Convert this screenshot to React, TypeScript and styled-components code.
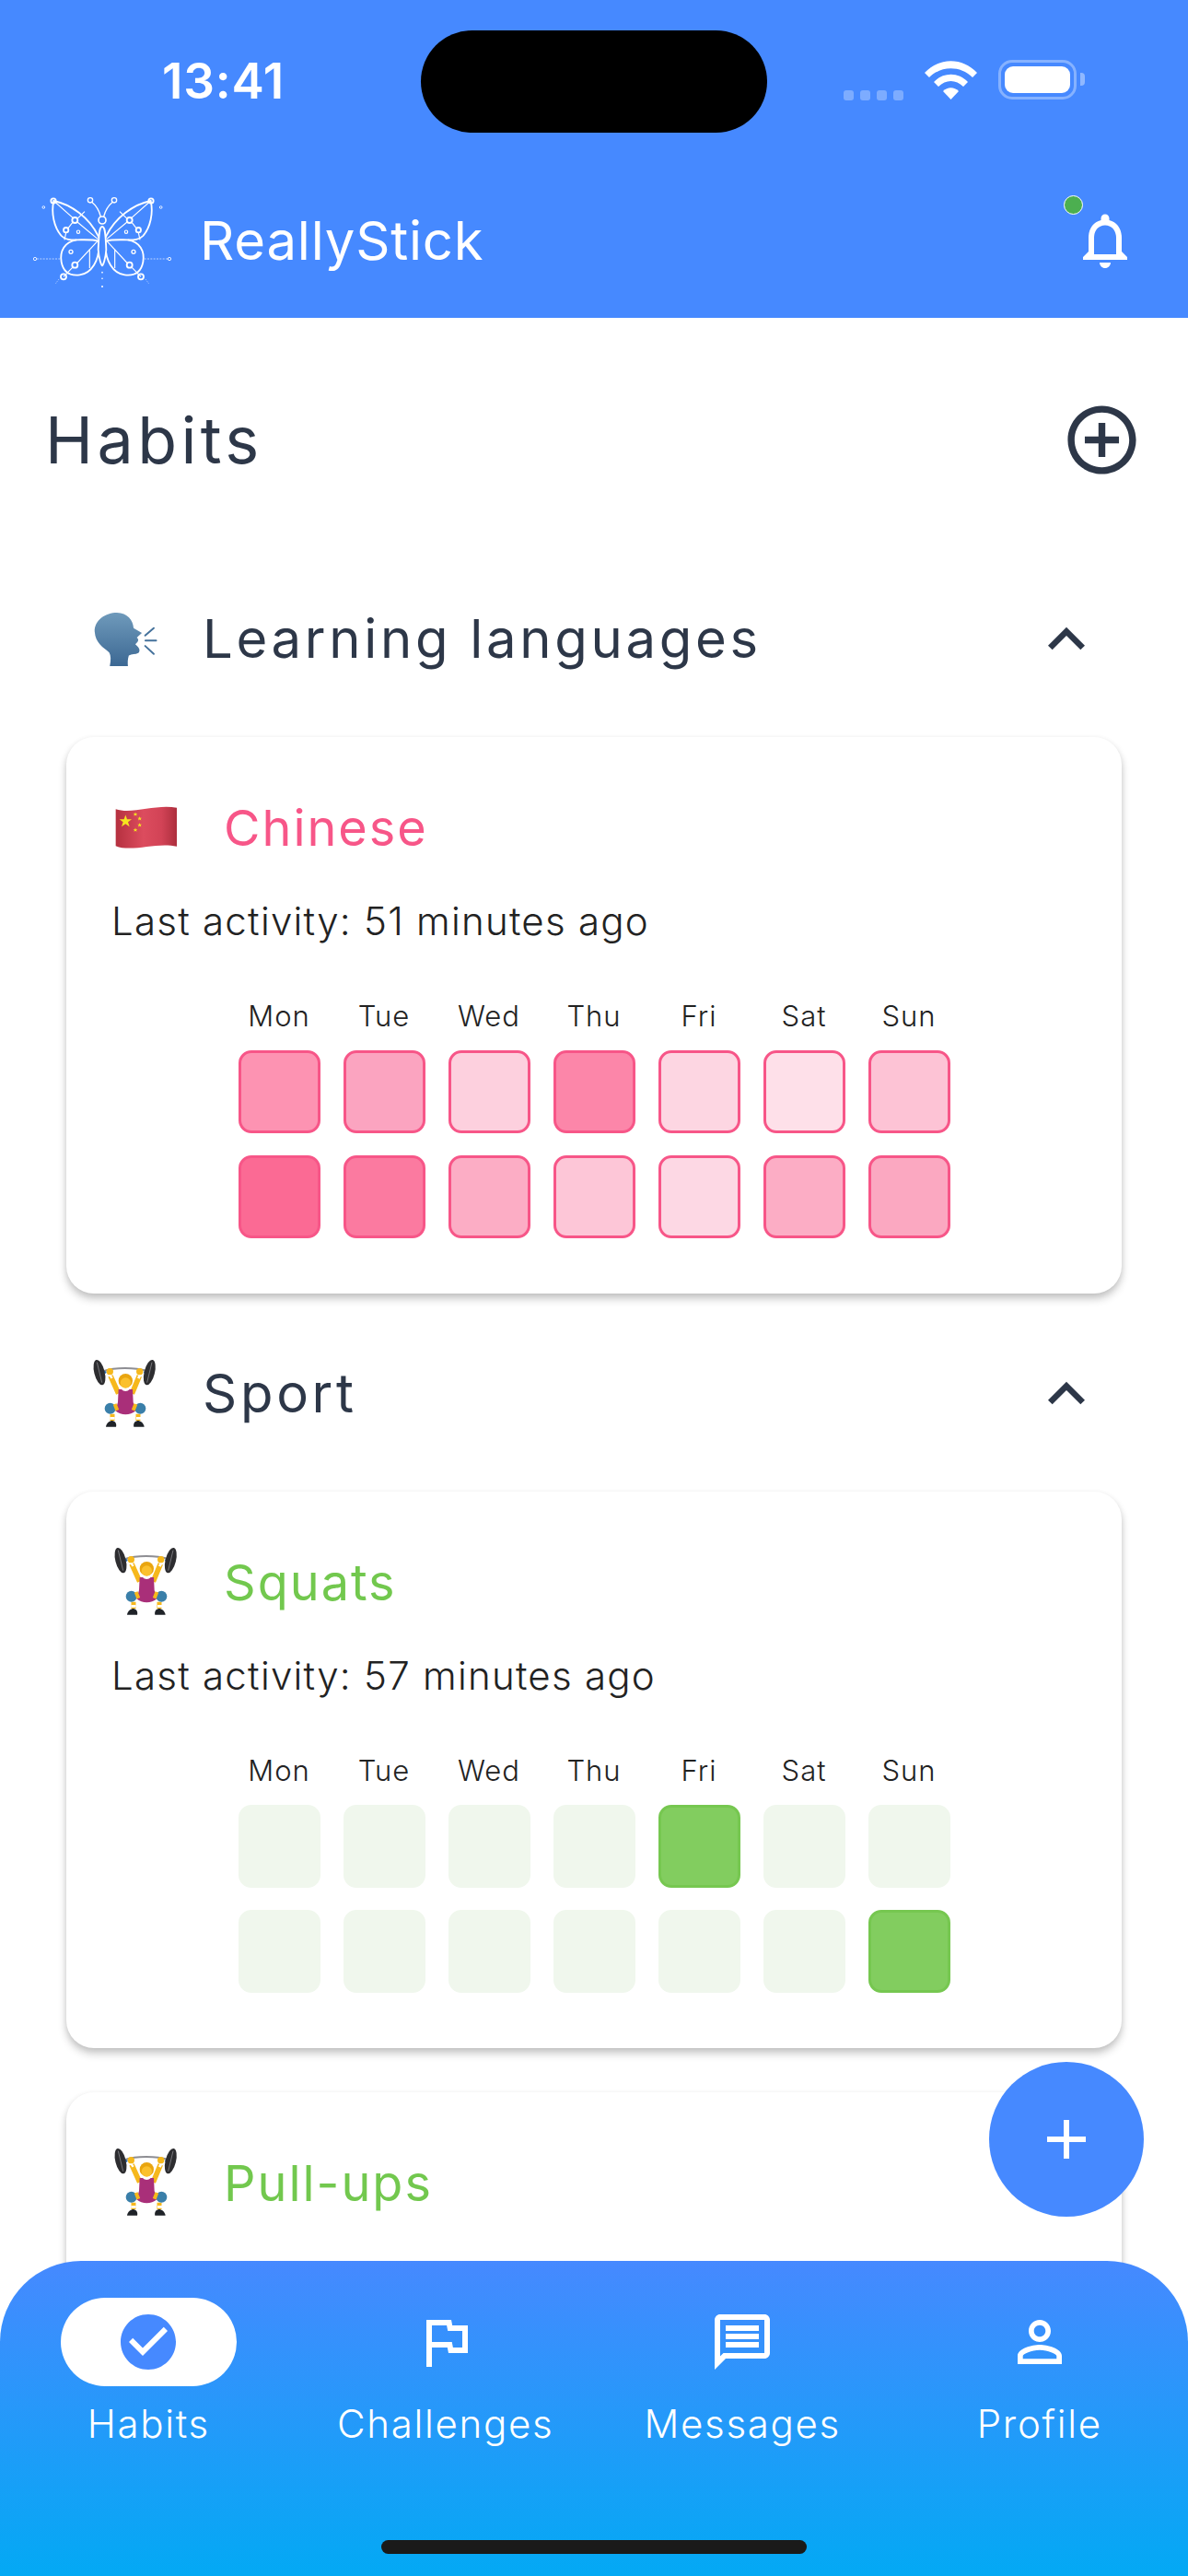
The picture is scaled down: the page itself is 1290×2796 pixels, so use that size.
import React from 'react'
import styled, { createGlobalStyle } from 'styled-components'

const GlobalStyle = createGlobalStyle`
  html, body {
    margin: 0;
    padding: 0;
    background: #fff;
  }
  * {
    box-sizing: border-box;
  }
`

const days = ['Mon', 'Tue', 'Wed', 'Thu', 'Fri', 'Sat', 'Sun']

const pinkCells = [
  '#fd93b2', '#fba4c0', '#fdd0de', '#fc86a9', '#fdd6e2', '#fee0e9', '#fdc3d5',
  '#fb6a94', '#fb7aa0', '#fcadc5', '#fdc6d7', '#fdd8e4', '#fcadc5', '#fba8c1',
]

const paleGreen = '#f0f7ed'
const fullGreen = '#82cd5f'

const squatCells = [
  paleGreen, paleGreen, paleGreen, paleGreen, fullGreen, paleGreen, paleGreen,
  paleGreen, paleGreen, paleGreen, paleGreen, paleGreen, paleGreen, fullGreen,
]

const pullCells = Array(14).fill(paleGreen)

const icons = {
  bell: 'M12 22c1.1 0 2-.9 2-2h-4c0 1.1.89 2 2 2zm6-6v-5c0-3.07-1.64-5.64-4.5-6.32V4c0-.83-.67-1.5-1.5-1.5s-1.5.67-1.5 1.5v.68C7.63 5.36 6 7.92 6 11v5l-2 2v1h16v-1l-2-2zm-2 1H8v-6c0-2.48 1.51-4.5 4-4.5s4 2.02 4 4.5v6z',
  addCircle: 'M13 7h-2v4H7v2h4v4h2v-4h4v-2h-4V7zm-1-5C6.48 2 2 6.48 2 12s4.48 10 10 10 10-4.48 10-10S17.52 2 12 2zm0 18c-4.41 0-8-3.59-8-8s3.59-8 8-8 8 3.59 8 8-3.59 8-8 8z',
  chevron: 'M12 8l-6 6 1.41 1.41L12 10.83l4.59 4.58L18 14z',
  plus: 'M19 13h-6v6h-2v-6H5v-2h6V5h2v6h6v2z',
  check: 'M12 2C6.48 2 2 6.48 2 12s4.48 10 10 10 10-4.48 10-10S17.52 2 12 2zm-2 15-5-5 1.41-1.41L10 14.17l7.59-7.59L19 8l-9 9z',
  flag: 'M12.36 6l.4 2H18v6h-3.36l-.4-2H7V6h5.36M14 4H5v17h2v-7h5.6l.4 2h7V6h-5.6L14 4z',
  message: 'M20 2H4c-1.1 0-1.99.9-1.99 2L2 22l4-4h14c1.1 0 2-.9 2-2V4c0-1.1-.9-2-2-2zm0 14H5.17L4 17.17V4h16v12zM6 12h12v2H6zm0-3h12v2H6zm0-3h12v2H6z',
  person: 'M12 5.9c1.16 0 2.1.94 2.1 2.1s-.94 2.1-2.1 2.1S9.9 9.16 9.9 8s.94-2.1 2.1-2.1m0 9c2.97 0 6.1 1.46 6.1 2.1v1.1H5.9V17c0-.64 3.13-2.1 6.1-2.1M12 4C9.79 4 8 5.79 8 8s1.79 4 4 4 4-1.79 4-4-1.79-4-4-4zm0 9c-2.67 0-8 1.34-8 4v3h16v-3c0-2.66-5.33-4-8-4z',
}

const Icon = ({ d, size, color }: { d: string; size: number; color: string }) => (
  <svg width={size} height={size} viewBox="0 0 24 24" fill={color}>
    <path d={d} />
  </svg>
)

const ButterflyWing = () => (
  <g fill="none" stroke="#fff" strokeWidth="5.5">
    <path d="M262 200C232 135 170 92 115 81C106 120 116 168 140 195C152 208 170 208 190 208C215 208 240 206 262 212" />
    <path d="M190 208C150 214 134 245 140 280C146 312 168 326 200 322C240 317 262 272 262 232" />
    <path d="M115 81L178 137M191 140L216 116M162 170L176 152M192 150L258 205M150 208L155 185" strokeWidth="3.5" />
    <path d="M258 212L190 285M147 328L176 298M232 300V238" strokeWidth="3.5" />
    <path d="M268 132C262 108 248 92 238 84" strokeWidth="4" />
    <circle cx="114" cy="81" r="8" />
    <circle cx="234" cy="79" r="8" strokeWidth="4" />
    <circle cx="184" cy="144" r="9" />
    <circle cx="155" cy="176" r="8" />
    <circle cx="195" cy="182" r="5" strokeWidth="3.5" />
    <circle cx="171" cy="247" r="6" strokeWidth="4" />
    <circle cx="184" cy="290" r="9" />
    <circle cx="147" cy="328" r="9" />
    <circle cx="82" cy="102" r="4" strokeWidth="2.5" />
    <circle cx="54" cy="270" r="5" strokeWidth="2.5" />
    <path d="M60 270H135" strokeWidth="2.5" strokeDasharray="6 4" opacity="0.75" />
    <path d="M132 336L120 352" strokeWidth="2.5" strokeDasharray="3 4" opacity="0.75" />
  </g>
)

const ButterflyLogo = () => (
  <svg width="180" height="140" viewBox="0 0 540 420">
    <ButterflyWing />
    <g transform="translate(546 0) scale(-1 1)">
      <ButterflyWing />
    </g>
    <circle cx="273" cy="144" r="12" fill="none" stroke="#fff" strokeWidth="5" />
    <path d="M273 165C262 165 262 200 260 240C262 270 270 290 273 292C276 290 284 270 286 240C284 200 284 165 273 165Z" fill="#4689ff" stroke="#fff" strokeWidth="5.5" />
    <circle cx="273" cy="314" r="2.5" fill="#fff" />
    <circle cx="273" cy="334" r="2.5" fill="#fff" />
    <circle cx="273" cy="360" r="3" fill="#fff" />
  </svg>
)

const SpeakingHead = () => (
  <svg width="72" height="60" viewBox="115 85 218 186">
    <defs>
      <linearGradient id="headFill" x1="0" y1="0" x2="0" y2="1">
        <stop offset="0" stopColor="#6f9abb" />
        <stop offset="1" stopColor="#3c6893" />
      </linearGradient>
    </defs>
    <path d="M172 268C176 248 176 232 170 222C150 205 124 192 121 152C120 112 158 88 196 88C232 90 250 112 252 140L280 156C272 164 264 170 263 172C270 178 270 184 258 194C272 206 276 216 268 224C258 230 246 226 236 232C232 244 232 256 233 268Z" fill="url(#headFill)" />
    <path d="M291 165L320 140M292 182H328M291 200L320 227" fill="none" stroke="#44719b" strokeWidth="6" strokeLinecap="round" />
  </svg>
)

const ChinaFlag = () => (
  <svg width="68" height="49" viewBox="194 698 204 146">
    <defs>
      <linearGradient id="flagFill" x1="0" y1="0" x2="1" y2="0">
        <stop offset="0" stopColor="#b5303f" />
        <stop offset="0.45" stopColor="#dc4c5e" />
        <stop offset="0.75" stopColor="#d24356" />
        <stop offset="1" stopColor="#ad2e3d" />
      </linearGradient>
    </defs>
    <path d="M196 710C250 728 330 692 395 706V832C330 816 250 852 196 830Z" fill="url(#flagFill)" />
    <path d="M228 729L233 743H248L236 752L241 767L228 758L215 767L220 752L208 743H223Z" fill="#f6e61f" />
    <path d="M260 720L262 725H267L263 728L265 733L260 730L255 733L257 728L253 725H258ZM274 734L276 739H281L277 742L279 747L274 744L269 747L271 742L267 739H272ZM274 755L276 760H281L277 763L279 768L274 765L269 768L271 763L267 760H272ZM260 771L262 776H267L263 779L265 784L260 781L255 784L257 779L253 776H258Z" fill="#f6e61f" />
  </svg>
)

const Weightlifter = () => (
  <svg width="75" height="78" viewBox="20 66 225 234">
    <path d="M65 108C100 96 165 96 205 108" fill="none" stroke="#8e8e93" strokeWidth="6" />
    <path d="M60 108L72 114M195 114L208 108" stroke="#2f6fb5" strokeWidth="7" />
    <ellipse cx="50" cy="113" rx="17" ry="42" transform="rotate(-14 50 113)" fill="#2d2d30" />
    <ellipse cx="213" cy="113" rx="17" ry="42" transform="rotate(14 213 113)" fill="#2d2d30" />
    <path d="M42 80L58 146M221 80L205 146" stroke="#77777c" strokeWidth="3" />
    <path d="M86 124L112 182M180 124L156 182" fill="none" stroke="#f6b81c" strokeWidth="17" />
    <path d="M84 128L90 124M176 124L184 128" stroke="#fff" strokeWidth="14" />
    <circle cx="84" cy="110" r="11" fill="#f6b81c" />
    <circle cx="181" cy="110" r="11" fill="#f6b81c" />
    <circle cx="135" cy="140" r="23" fill="#e9a50f" />
    <circle cx="135" cy="147" r="17" fill="#fbc02d" />
    <path d="M112 168H122C128 176 142 176 148 168H158L160 210L168 238C150 254 120 254 102 238L110 210Z" fill="#a92f79" />
    <path d="M92 248V270M176 248V270" stroke="#f6b81c" strokeWidth="15" />
    <path d="M84 262H100M170 262H186" stroke="#fff" strokeWidth="8" />
    <circle cx="85" cy="230" r="18" fill="#3a7fa9" />
    <circle cx="183" cy="230" r="18" fill="#3a7fa9" />
    <path d="M100 216L108 236M168 216L160 236" stroke="#f6b81c" strokeWidth="12" />
    <path d="M71 290C72 278 84 270 92 270C104 272 106 284 104 290Z" fill="#1f2328" />
    <path d="M162 290C160 284 162 272 174 270C184 270 194 278 196 290Z" fill="#1f2328" />
  </svg>
)

const Page = styled.div`
  position: relative;
  display: flex;
  flex-direction: column;
  width: 1290px;
  height: 2796px;
  overflow: hidden;
  background: #fff;
  font-family: 'Inter', 'Liberation Sans', sans-serif;
`

const TopBar = styled.header`
  flex: none;
  height: 345px;
  background: #4689ff;
  color: #fff;
`

const StatusBar = styled.div`
  display: grid;
  grid-template-columns: 457px 376px 1fr;
  align-items: center;
  height: 177px;
  padding-top: 33px;
  padding-bottom: 33px;
`

const Clock = styled.div`
  padding-left: 176px;
  font-size: 53px;
  font-weight: 600;
  letter-spacing: 0.8px;
  line-height: 1;
`

const Island = styled.div`
  height: 111px;
  border-radius: 56px;
  background: #000;
`

const StatusIcons = styled.div`
  display: flex;
  align-items: flex-end;
  height: 42px;
  margin-top: -4px;
  padding-left: 83px;
`

const SignalDots = styled.div`
  display: flex;
  gap: 7px;
  margin-right: 23px;
  margin-bottom: -1px;
`

const SignalDot = styled.span`
  width: 11px;
  height: 11px;
  border-radius: 3px;
  background: rgba(255, 255, 255, 0.3);
`

const Battery = styled.div`
  position: relative;
  width: 85px;
  height: 43px;
  margin-left: 23px;
  padding: 4px;
  border: 3px solid rgba(255, 255, 255, 0.35);
  border-radius: 15px;

  &::after {
    content: '';
    position: absolute;
    top: 11px;
    right: -12px;
    width: 5px;
    height: 14px;
    border-radius: 0 4px 4px 0;
    background: rgba(255, 255, 255, 0.4);
  }
`

const BatteryFill = styled.div`
  height: 100%;
  border-radius: 9px;
  background: #fff;
`

const AppRow = styled.div`
  display: flex;
  align-items: center;
  justify-content: space-between;
  height: 168px;
  padding: 0 54px 0 20px;
`

const Brand = styled.div`
  display: flex;
  align-items: center;
  gap: 17px;
  font-size: 58px;
  font-weight: 400;
  letter-spacing: 0.8px;
`

const BellWrap = styled.div`
  position: relative;
  width: 72px;
  height: 72px;
`

const GreenDot = styled.span`
  position: absolute;
  top: -13px;
  left: -9px;
  width: 21px;
  height: 21px;
  border: 1px solid #fff;
  border-radius: 50%;
  background: #4caf50;
`

const Content = styled.main`
  flex: 1;
  min-height: 0;
  overflow: hidden;
  padding: 0 72px;
`

const TitleRow = styled.div`
  display: flex;
  align-items: center;
  justify-content: space-between;
  height: 264px;
  margin: 0 -23px 25px -23px;
`

const PageTitle = styled.h1`
  margin: 0;
  color: #2d3748;
  font-size: 70px;
  font-weight: 400;
  letter-spacing: 4.4px;
`

const SectionHead = styled.div`
  display: flex;
  align-items: center;
  height: 120px;
  margin-bottom: 46px;
  padding-left: 26px;
`

const EmojiSlot = styled.div`
  display: flex;
  align-items: center;
  justify-content: center;
  width: 75px;
  flex: none;
`

const SectionTitle = styled.h2`
  flex: 1;
  margin: -2px 0 0 47px;
  color: #2d3748;
  font-size: 58px;
  font-weight: 400;
  letter-spacing: 3.7px;
`

const Chevron = styled.div`
  display: flex;
  margin-right: 20px;
`

const Section = styled.section`
  margin-bottom: 49px;
`

const Card = styled.article`
  height: 604px;
  margin-bottom: 48px;
  padding: 60px 49px 0;
  border-radius: 30px;
  background: #fff;
  box-shadow: 0 6px 10px rgba(0, 0, 0, 0.2), 0 2px 6px rgba(0, 0, 0, 0.08);
`

const CardHead = styled.div`
  display: flex;
  align-items: center;
  height: 76px;
`

const CardTitle = styled.h3<{ $color: string }>`
  margin: 0 0 0 47px;
  color: ${(p) => p.$color};
  font-size: 54px;
  font-weight: 400;
  letter-spacing: 2px;
`

const LastActivity = styled.p`
  margin: 39px 0 0;
  color: #222;
  font-size: 42px;
  font-weight: 300;
  letter-spacing: 1.25px;
  line-height: 50px;
`

const WeekGrid = styled.div`
  display: grid;
  grid-template-columns: repeat(7, 89px);
  gap: 0 25px;
  justify-content: center;
  margin-top: 60px;
`

const DayLabel = styled.span`
  height: 55px;
  color: #222;
  font-size: 31px;
  font-weight: 300;
  letter-spacing: 1px;
  line-height: 36px;
  text-align: center;
`

const Cell = styled.div<{ $fill: string; $border: string }>`
  height: 90px;
  margin-bottom: 24px;
  border: 3px solid ${(p) => p.$border};
  border-radius: 14px;
  background: ${(p) => p.$fill};
`

const Fab = styled.button`
  position: absolute;
  top: 2238px;
  left: 1074px;
  display: flex;
  align-items: center;
  justify-content: center;
  width: 168px;
  height: 168px;
  padding: 0;
  border: 0;
  border-radius: 50%;
  background: #4689ff;
`

const BottomNav = styled.nav`
  position: absolute;
  left: 0;
  right: 0;
  bottom: 0;
  height: 342px;
  padding-top: 40px;
  border-radius: 88px 88px 0 0;
  background: linear-gradient(180deg, #4689ff 0%, #03a9f4 100%);
`

const NavRow = styled.div`
  display: grid;
  grid-template-columns: repeat(4, 1fr);
`

const NavItem = styled.div`
  display: flex;
  flex-direction: column;
  align-items: center;
  color: #fff;
  font-size: 42px;
  font-weight: 300;
  letter-spacing: 1.7px;
`

const NavIconBox = styled.div<{ $active?: boolean }>`
  display: flex;
  align-items: center;
  justify-content: center;
  width: 191px;
  height: 96px;
  margin-bottom: 15px;
  border-radius: 48px;
  background: ${(p) => (p.$active ? '#fff' : 'transparent')};
`

const HomeIndicator = styled.div`
  position: absolute;
  left: 414px;
  bottom: 24px;
  width: 462px;
  height: 15px;
  border-radius: 8px;
  background: #1a1a1a;
`

type HabitProps = {
  emoji: React.ReactNode
  title: string
  color: string
  activity: string
  cells: string[]
  borderFor: (fill: string) => string
}

const HabitCard = ({ emoji, title, color, activity, cells, borderFor }: HabitProps) => (
  <Card>
    <CardHead>
      <EmojiSlot>{emoji}</EmojiSlot>
      <CardTitle $color={color}>{title}</CardTitle>
    </CardHead>
    <LastActivity>{activity}</LastActivity>
    <WeekGrid>
      {days.map((day) => (
        <DayLabel key={day}>{day}</DayLabel>
      ))}
      {cells.map((fill, i) => (
        <Cell key={i} $fill={fill} $border={borderFor(fill)} />
      ))}
    </WeekGrid>
  </Card>
)

const pinkBorder = () => '#f75688'
const greenBorder = (fill: string) => (fill === fullGreen ? '#76c750' : paleGreen)

const navItems = [
  { label: 'Habits', icon: icons.check, active: true },
  { label: 'Challenges', icon: icons.flag },
  { label: 'Messages', icon: icons.message },
  { label: 'Profile', icon: icons.person },
]

const App = () => {
  return (
    <Page>
      <GlobalStyle />
      <TopBar>
        <StatusBar>
          <Clock>13:41</Clock>
          <Island />
          <StatusIcons>
            <SignalDots>
              <SignalDot />
              <SignalDot />
              <SignalDot />
              <SignalDot />
            </SignalDots>
            <svg width="57" height="42" viewBox="0 0 57 42" fill="#fff">
              <path d="M0 13C16-4 41-4 57 13L52 18C39 5 18 5 5 18Z" />
              <path d="M10 23C20 12 37 12 47 23L42 28C34 20 23 20 15 28Z" />
              <path d="M20 33C25 28 32 28 37 33L28.500 42Z" />
            </svg>
            <Battery>
              <BatteryFill />
            </Battery>
          </StatusIcons>
        </StatusBar>
        <AppRow>
          <Brand>
            <ButterflyLogo />
            ReallyStick
          </Brand>
          <BellWrap>
            <Icon d={icons.bell} size={72} color="#fff" />
            <GreenDot />
          </BellWrap>
        </AppRow>
      </TopBar>

      <Content>
        <TitleRow>
          <PageTitle>Habits</PageTitle>
          <Icon d={icons.addCircle} size={89} color="#2d3748" />
        </TitleRow>

        <Section>
          <SectionHead>
            <EmojiSlot>
              <SpeakingHead />
            </EmojiSlot>
            <SectionTitle>Learning languages</SectionTitle>
            <Chevron>
              <Icon d={icons.chevron} size={80} color="#2d3748" />
            </Chevron>
          </SectionHead>
          <HabitCard
            emoji={<ChinaFlag />}
            title="Chinese"
            color="#f75688"
            activity="Last activity: 51 minutes ago"
            cells={pinkCells}
            borderFor={pinkBorder}
          />
        </Section>

        <Section>
          <SectionHead>
            <EmojiSlot>
              <Weightlifter />
            </EmojiSlot>
            <SectionTitle>Sport</SectionTitle>
            <Chevron>
              <Icon d={icons.chevron} size={80} color="#2d3748" />
            </Chevron>
          </SectionHead>
          <HabitCard
            emoji={<Weightlifter />}
            title="Squats"
            color="#72c84e"
            activity="Last activity: 57 minutes ago"
            cells={squatCells}
            borderFor={greenBorder}
          />
          <HabitCard
            emoji={<Weightlifter />}
            title="Pull-ups"
            color="#72c84e"
            activity="Last activity: 58 minutes ago"
            cells={pullCells}
            borderFor={greenBorder}
          />
        </Section>
      </Content>

      <Fab aria-label="Add">
        <Icon d={icons.plus} size={72} color="#fff" />
      </Fab>

      <BottomNav>
        <NavRow>
          {navItems.map((item) => (
            <NavItem key={item.label}>
              <NavIconBox $active={item.active}>
                <Icon d={item.icon} size={72} color={item.active ? '#4689ff' : '#fff'} />
              </NavIconBox>
              {item.label}
            </NavItem>
          ))}
        </NavRow>
      </BottomNav>
      <HomeIndicator />
    </Page>
  )
}

export default App
